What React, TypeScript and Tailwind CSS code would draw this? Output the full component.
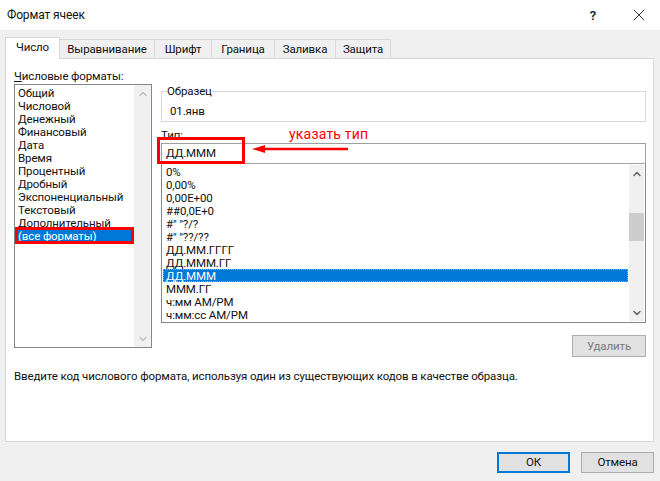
import { ChevronDown, ChevronUp, X } from "lucide-react";

const categories = [
  "Общий",
  "Числовой",
  "Денежный",
  "Финансовый",
  "Дата",
  "Время",
  "Процентный",
  "Дробный",
  "Экспоненциальный",
  "Текстовый",
  "Дополнительный",
];

const formats = [
  "0%",
  "0,00%",
  "0,00E+00",
  "##0,0E+0",
  '#" "?/?',
  '#" "??/??',
  "ДД.ММ.ГГГГ",
  "ДД.МММ.ГГ",
  "ДД.МММ",
  "МММ.ГГ",
  "ч:мм AM/PM",
  "ч:мм:сс AM/PM",
];

const tabs = [
  { label: "Выравнивание", width: "w-[95px]" },
  { label: "Шрифт", width: "w-[57px]" },
  { label: "Граница", width: "w-[63px]" },
  { label: "Заливка", width: "w-[61px]" },
  { label: "Защита", width: "w-[55px]" },
];

function ListScrollBar() {
  return (
    <div className="flex w-[17px] shrink-0 flex-col items-center justify-between bg-[#f0f0f0]">
      <div className="flex h-[17px] items-center justify-center">
        <ChevronUp className="size-3 text-[#c0c0c0]" strokeWidth={3} />
      </div>
      <div className="flex h-[17px] items-center justify-center">
        <ChevronDown className="size-3 text-[#c0c0c0]" strokeWidth={3} />
      </div>
    </div>
  );
}

function FormatScrollBar() {
  return (
    <div className="my-px mr-px flex w-[15px] shrink-0 flex-col items-center bg-[#f0f0f0]">
      <div className="flex h-[17px] items-center justify-center">
        <ChevronUp className="size-3 text-[#606060]" strokeWidth={3} />
      </div>
      <div className="mt-[31px] h-[28px] w-full bg-[#cdcdcd]" />
      <div className="mt-auto flex h-[17px] items-center justify-center">
        <ChevronDown className="size-3 text-[#606060]" strokeWidth={3} />
      </div>
    </div>
  );
}

export default function App() {
  return (
    <div className="flex h-[481px] w-[660px] flex-col overflow-hidden bg-[#f0f0f0] font-['Roboto','Noto_Sans',sans-serif] text-[11.5px] leading-[13px] tracking-[-0.12px] text-[#111]">
      <div className="flex h-[30px] shrink-0 items-center bg-white pl-[7px] pr-[11px]">
        <span className="text-[12px]">Формат ячеек</span>
        <span className="ml-auto mr-[33px] text-[13px] font-semibold text-[#222]">?</span>
        <X className="size-[20px] text-[#222]" strokeWidth={1.1} />
      </div>

      <div className="ml-[5px] mt-[7px] flex h-[21px] items-end">
        <div className="relative z-10 flex h-[22px] w-[55px] translate-y-px items-center justify-center border border-b-0 border-[#d9d9d9] bg-white pb-[2px]">
          Число
        </div>
        {tabs.map((t) => (
          <div
            key={t.label}
            className={`flex h-[19px] items-center justify-center border border-b-0 border-l-0 border-[#d9d9d9] bg-[#f0f0f0] ${t.width}`}
          >
            {t.label}
          </div>
        ))}
      </div>

      <div className="ml-[5px] flex h-[384px] w-[649px] flex-col border border-[#d9d9d9] bg-white pl-[8px] pr-[7px] pt-[11px]">
        <div className="flex gap-[9px]">
          <div className="w-[138px] shrink-0">
            <div className="h-[14px] whitespace-nowrap leading-[12px]">
              <span className="underline">Ч</span>исловые форматы:
            </div>
            <div className="flex h-[264px] border border-[#828790] bg-white">
              <div className="relative min-w-0 flex-1 pl-[3px] pt-[1px]">
                {categories.map((c) => (
                  <div key={c} className="h-[13px] whitespace-nowrap leading-[15px]">
                    {c}
                  </div>
                ))}
                <div className="-ml-[3px] flex h-[13px] items-center bg-[#0078d7] pl-[3px] pt-px text-white">
                  (все форматы)
                </div>
                <div className="absolute left-0 top-[142px] h-[17px] w-[119px] border-[3px] border-[#ff0000]" />
              </div>
              <ListScrollBar />
            </div>
          </div>

          <div className="relative mt-[14px] min-w-0 flex-1">
            <fieldset className="h-[38px] border border-[#d9d9d9] pl-[5px]">
              <legend className="leading-[15px]">Образец</legend>
              <div className="pl-[3px] pt-[6px]">01.янв</div>
            </fieldset>
            <div className="mt-[6px] h-[15px] leading-[15px]">Тип:</div>
            <div className="flex h-[21px] items-center border border-[#a0a0a0] pb-px pl-[4px]">ДД.МММ</div>
            <div className="flex h-[159px] border border-t-0 border-[#828790]">
              <div className="min-w-0 flex-1 pl-[1px] pr-px pt-[1px]">
                {formats.map((f) => (
                  <div
                    key={f}
                    className={
                      f === "ДД.МММ"
                        ? "flex h-[13px] items-center whitespace-nowrap border border-dotted border-[#f0a040] bg-[#0078d7] pl-[2px] pt-px text-white"
                        : "h-[13px] whitespace-nowrap pl-[3px] leading-[15px]"
                    }
                  >
                    {f}
                  </div>
                ))}
              </div>
              <FormatScrollBar />
            </div>

            <div className="absolute -left-[4px] top-[53px] h-[27px] w-[88px] border-[3px] border-[#ff0000]" />
            <svg className="absolute left-[91px] top-[59px]" width="96" height="12" viewBox="0 0 96 12">
              <path d="M0 6 L13 2 L13 4.8 L96 4.8 L96 7.2 L13 7.2 L13 10 Z" fill="#ff0000" />
            </svg>
            <span className="absolute left-[128px] top-[44px] whitespace-nowrap text-[14px] tracking-[0.2px] text-[#ff0000]">
              указать тип
            </span>

            <div className="ml-auto mt-[12px] flex h-[22px] w-[74px] items-center justify-center border border-[#adadad] bg-[#e1e1e1] text-[#7a7a7a]">
              Удалить
            </div>
          </div>
        </div>
        <div className="mt-[13px] whitespace-nowrap">
          Введите код числового формата, используя один из существующих кодов в качестве образца.
        </div>
      </div>

      <div className="mt-[10px] flex justify-end gap-[11px] pr-[6px]">
        <div className="flex h-[21px] w-[73px] items-center justify-center border-[2px] border-[#0078d7] bg-[#e1e1e1]">
          ОК
        </div>
        <div className="flex h-[21px] w-[73px] items-center justify-center border border-[#adadad] bg-[#e1e1e1]">
          Отмена
        </div>
      </div>
    </div>
  );
}
